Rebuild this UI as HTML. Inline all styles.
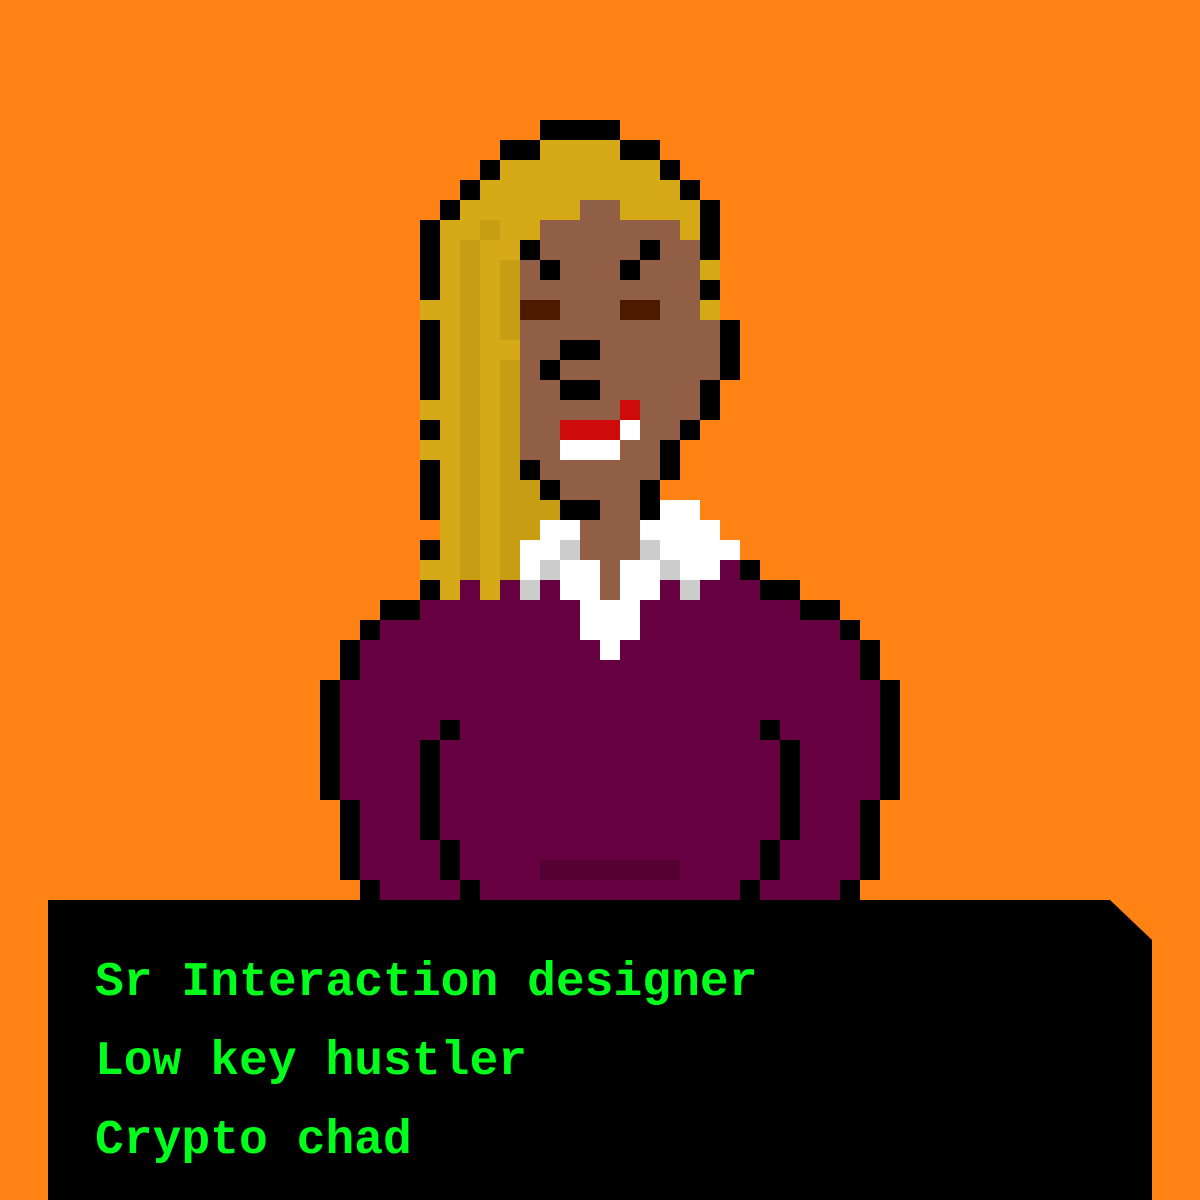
<!DOCTYPE html>
<html><head><meta charset="utf-8"><style>
html,body{margin:0;padding:0;}
body{width:1200px;height:1200px;background:#FF8214;position:relative;overflow:hidden;}
svg{position:absolute;left:0;top:0;}
.t{position:absolute;left:95px;font-family:"Liberation Mono",monospace;font-weight:bold;font-size:48px;line-height:48px;color:#00FF1A;white-space:pre;}
</style></head><body>
<svg width="1200" height="1200" viewBox="0 0 60 60" shape-rendering="crispEdges">
<g>
<rect x="17" y="34" width="27" height="6" fill="#660040"/>
<rect x="18" y="33" width="25" height="1" fill="#660040"/>
<rect x="18" y="40" width="25" height="4" fill="#660040"/>
<rect x="18" y="32" width="12" height="1" fill="#660040"/><rect x="31" y="32" width="12" height="1" fill="#660040"/>
<rect x="19" y="31" width="10" height="1" fill="#660040"/><rect x="32" y="31" width="10" height="1" fill="#660040"/>
<rect x="21" y="30" width="8" height="1" fill="#660040"/><rect x="32" y="30" width="8" height="1" fill="#660040"/>
<rect x="19" y="44" width="4" height="1" fill="#660040"/><rect x="24" y="44" width="13" height="1" fill="#660040"/><rect x="38" y="44" width="4" height="1" fill="#660040"/>
<rect x="27" y="43" width="7" height="1" fill="#550032"/>
<rect x="19" y="30" width="2" height="1" fill="#000"/><rect x="40" y="30" width="2" height="1" fill="#000"/>
<rect x="18" y="31" width="1" height="1" fill="#000"/><rect x="42" y="31" width="1" height="1" fill="#000"/>
<rect x="17" y="32" width="1" height="2" fill="#000"/><rect x="43" y="32" width="1" height="2" fill="#000"/>
<rect x="16" y="34" width="1" height="6" fill="#000"/><rect x="44" y="34" width="1" height="6" fill="#000"/>
<rect x="17" y="40" width="1" height="4" fill="#000"/><rect x="43" y="40" width="1" height="4" fill="#000"/>
<rect x="18" y="44" width="1" height="1" fill="#000"/><rect x="23" y="44" width="1" height="1" fill="#000"/><rect x="37" y="44" width="1" height="1" fill="#000"/><rect x="42" y="44" width="1" height="1" fill="#000"/>
<rect x="22" y="36" width="1" height="1" fill="#000"/><rect x="38" y="36" width="1" height="1" fill="#000"/>
<rect x="21" y="37" width="1" height="5" fill="#000"/><rect x="39" y="37" width="1" height="5" fill="#000"/>
<rect x="22" y="42" width="1" height="2" fill="#000"/><rect x="38" y="42" width="1" height="2" fill="#000"/>
<rect x="29" y="30" width="3" height="2" fill="#fff"/><rect x="30" y="32" width="1" height="1" fill="#fff"/>
</g>
<g>
<rect x="27" y="6" width="4" height="1" fill="#000"/>
<rect x="25" y="7" width="2" height="1" fill="#000"/><rect x="27" y="7" width="4" height="1" fill="#D6A916"/><rect x="31" y="7" width="2" height="1" fill="#000"/>
<rect x="24" y="8" width="1" height="1" fill="#000"/><rect x="25" y="8" width="8" height="1" fill="#D6A916"/><rect x="33" y="8" width="1" height="1" fill="#000"/>
<rect x="23" y="9" width="1" height="1" fill="#000"/><rect x="24" y="9" width="10" height="1" fill="#D6A916"/><rect x="34" y="9" width="1" height="1" fill="#000"/>
<rect x="22" y="10" width="1" height="1" fill="#000"/><rect x="23" y="10" width="6" height="1" fill="#D6A916"/><rect x="29" y="10" width="2" height="1" fill="#915F45"/><rect x="31" y="10" width="4" height="1" fill="#D6A916"/><rect x="35" y="10" width="1" height="1" fill="#000"/>
<rect x="22" y="11" width="4" height="18" fill="#D6A916"/>
<rect x="26" y="11" width="1" height="1" fill="#D6A916"/>
<rect x="23" y="12" width="1" height="17" fill="#C79D14"/>
<rect x="25" y="13" width="1" height="4" fill="#C79D14"/>
<rect x="25" y="18" width="1" height="11" fill="#C79D14"/>
<rect x="24" y="11" width="1" height="1" fill="#C79D14"/>
<rect x="26" y="24" width="1" height="3" fill="#C79D14"/>
<rect x="27" y="25" width="1" height="1" fill="#C79D14"/>
<rect x="22" y="29" width="1" height="1" fill="#D6A916"/><rect x="24" y="29" width="1" height="1" fill="#D6A916"/>
<rect x="23" y="29" width="1" height="1" fill="#660040"/><rect x="25" y="29" width="1" height="1" fill="#660040"/>
<rect x="21" y="11" width="1" height="19" fill="#000"/>
<rect x="21" y="15" width="1" height="1" fill="#D6A916"/>
<rect x="21" y="20" width="1" height="1" fill="#D6A916"/>
<rect x="21" y="22" width="1" height="1" fill="#D6A916"/>
<rect x="21" y="26" width="1" height="1" fill="#FF8214"/>
<rect x="21" y="28" width="1" height="1" fill="#D6A916"/>
<rect x="27" y="11" width="7" height="1" fill="#915F45"/><rect x="34" y="11" width="1" height="1" fill="#D6A916"/><rect x="35" y="11" width="1" height="1" fill="#000"/>
<rect x="26" y="12" width="1" height="1" fill="#000"/><rect x="27" y="12" width="8" height="1" fill="#915F45"/><rect x="32" y="12" width="1" height="1" fill="#000"/><rect x="35" y="12" width="1" height="1" fill="#000"/>
<rect x="26" y="13" width="9" height="1" fill="#915F45"/><rect x="27" y="13" width="1" height="1" fill="#000"/><rect x="31" y="13" width="1" height="1" fill="#000"/><rect x="35" y="13" width="1" height="1" fill="#D6A916"/>
<rect x="26" y="14" width="9" height="1" fill="#915F45"/><rect x="35" y="14" width="1" height="1" fill="#000"/>
<rect x="26" y="15" width="9" height="1" fill="#915F45"/><rect x="26" y="15" width="2" height="1" fill="#4D1A00"/><rect x="31" y="15" width="2" height="1" fill="#4D1A00"/><rect x="35" y="15" width="1" height="1" fill="#D6A916"/>
<rect x="26" y="16" width="10" height="3" fill="#915F45"/><rect x="36" y="16" width="1" height="3" fill="#000"/>
<rect x="25" y="17" width="1" height="1" fill="#D6A916"/>
<rect x="28" y="17" width="2" height="1" fill="#000"/>
<rect x="27" y="18" width="1" height="1" fill="#000"/>
<rect x="26" y="19" width="9" height="1" fill="#915F45"/><rect x="28" y="19" width="2" height="1" fill="#000"/><rect x="35" y="19" width="1" height="2" fill="#000"/>
<rect x="26" y="20" width="9" height="1" fill="#915F45"/><rect x="31" y="20" width="1" height="1" fill="#CE0A0A"/>
<rect x="26" y="21" width="8" height="1" fill="#915F45"/><rect x="28" y="21" width="3" height="1" fill="#CE0A0A"/><rect x="31" y="21" width="1" height="1" fill="#fff"/><rect x="34" y="21" width="1" height="1" fill="#000"/>
<rect x="26" y="22" width="7" height="1" fill="#915F45"/><rect x="28" y="22" width="3" height="1" fill="#fff"/><rect x="33" y="22" width="1" height="2" fill="#000"/>
<rect x="26" y="23" width="1" height="1" fill="#000"/><rect x="27" y="23" width="6" height="1" fill="#915F45"/>
<rect x="27" y="24" width="1" height="1" fill="#000"/><rect x="28" y="24" width="4" height="1" fill="#915F45"/><rect x="32" y="24" width="1" height="2" fill="#000"/>
<rect x="28" y="25" width="2" height="1" fill="#000"/><rect x="30" y="25" width="2" height="1" fill="#915F45"/>
<rect x="29" y="26" width="3" height="2" fill="#915F45"/>
<rect x="30" y="28" width="1" height="2" fill="#915F45"/>
<rect x="33" y="25" width="2" height="1" fill="#fff"/>
<rect x="27" y="26" width="2" height="1" fill="#fff"/><rect x="32" y="26" width="4" height="1" fill="#fff"/>
<rect x="26" y="27" width="2" height="1" fill="#fff"/><rect x="28" y="27" width="1" height="1" fill="#ccc"/><rect x="32" y="27" width="1" height="1" fill="#ccc"/><rect x="33" y="27" width="4" height="1" fill="#fff"/>
<rect x="26" y="28" width="1" height="1" fill="#fff"/><rect x="27" y="28" width="1" height="1" fill="#ccc"/><rect x="28" y="28" width="2" height="1" fill="#fff"/><rect x="31" y="28" width="2" height="1" fill="#fff"/><rect x="33" y="28" width="1" height="1" fill="#ccc"/><rect x="34" y="28" width="2" height="1" fill="#fff"/><rect x="36" y="28" width="1" height="1" fill="#660040"/><rect x="37" y="28" width="1" height="1" fill="#000"/>
<rect x="26" y="29" width="1" height="1" fill="#ccc"/><rect x="27" y="29" width="1" height="1" fill="#660040"/><rect x="28" y="29" width="2" height="1" fill="#fff"/><rect x="31" y="29" width="2" height="1" fill="#fff"/><rect x="33" y="29" width="1" height="1" fill="#660040"/><rect x="34" y="29" width="1" height="1" fill="#ccc"/><rect x="35" y="29" width="3" height="1" fill="#660040"/><rect x="38" y="29" width="2" height="1" fill="#000"/>
</g>
</svg>
<svg width="1200" height="1200" viewBox="0 0 1200 1200"><polygon points="48,900 1110,900 1152,940 1152,1200 48,1200" fill="#000"/></svg>
<div class="t" style="top:959px">Sr Interaction designer</div>
<div class="t" style="top:1038px">Low key hustler</div>
<div class="t" style="top:1117px">Crypto chad</div>
</body></html>
